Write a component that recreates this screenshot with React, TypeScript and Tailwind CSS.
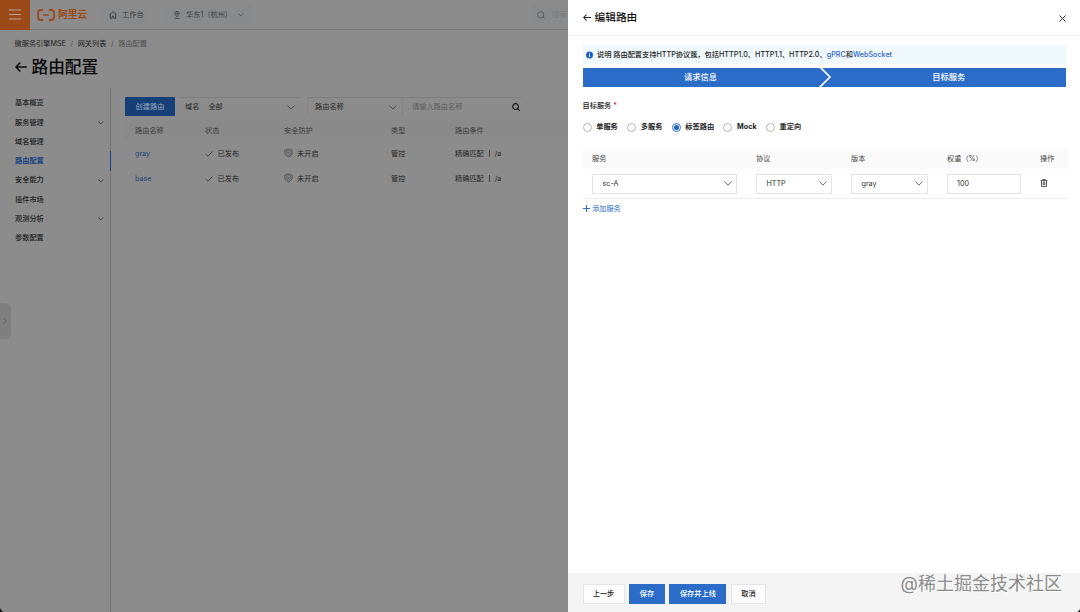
import React, { useState } from 'react';
import clsx from 'clsx';

const menuItems = [
  { label: '基本概览' },
  { label: '服务管理', expandable: true },
  { label: '域名管理' },
  { label: '路由配置', active: true },
  { label: '安全能力', expandable: true },
  { label: '插件市场' },
  { label: '观测分析', expandable: true },
  { label: '参数配置' },
];

const routes = [
  { name: 'gray', status: '已发布', security: '未开启', type: '管控', path: '/a' },
  { name: 'base', status: '已发布', security: '未开启', type: '管控', path: '/a' },
];

const targetTypes = ['单服务', '多服务', '标签路由', 'Mock', '重定向'];

const Chevron = ({ className }: { className?: string }) => (
  <svg viewBox="0 0 8 5" fill="none" stroke="currentColor" className={clsx('shrink-0', className)}>
    <path d="M0.5 0.6 4 4.2 7.5 0.6" />
  </svg>
);

const BackArrow = ({ className }: { className?: string }) => (
  <svg viewBox="0 0 12 10" fill="none" stroke="currentColor" strokeWidth="1.6" strokeLinecap="round" strokeLinejoin="round" className={clsx('shrink-0', className)}>
    <path d="M11.2 5H1M4.8 1 1 5l3.8 4" />
  </svg>
);

const TopBar = () => (
  <header className="flex h-[30px] shrink-0 items-center border-b border-[#7c7c7c]">
    <div className="flex h-[30px] w-[30px] shrink-0 items-center justify-center bg-[#9c4a17]">
      <svg viewBox="0 0 12 11" className="h-[11px] w-3" stroke="#b9a294" strokeWidth="1.1">
        <path d="M0 1h12M0 5.5h12M0 10h12" />
      </svg>
    </div>
    <svg viewBox="0 0 18 12" className="ml-[7px] h-3 w-[18px] shrink-0" fill="none" stroke="#9c4a17" strokeWidth="1.9">
      <path d="M6 1H4Q1 1 1 4v4q0 3 3 3h2M12 1h2q3 0 3 3v4q0 3-3 3h-2" />
      <path d="M6 6h6" strokeWidth="1.5" />
    </svg>
    <span className="mt-px ml-[3px] w-[30px] text-[9.8px] font-bold text-[#9c4a17]">阿里云</span>
    <div className="ml-[14px] flex h-5 w-[48px] items-center bg-[#888a8b] pl-[7px] text-[#3c3c3c]">
      <svg viewBox="0 0 8 8" className="h-2 w-2 shrink-0" fill="none" stroke="currentColor" strokeWidth="0.9">
        <path d="M0.4 3.6 4 0.8l3.6 2.8M1.3 3.2v4.2h1.9V5.2h1.6v2.2h1.9V3.2" />
      </svg>
      <span className="ml-[5px]">工作台</span>
    </div>
    <div className="ml-[17px] flex h-5 w-[86px] items-center bg-[#888a8b] pl-1.5 text-[#3c3c3c]">
      <svg viewBox="0 0 8 9" className="h-2 w-2 shrink-0" fill="none" stroke="currentColor" strokeWidth="0.9">
        <path d="M4 6.4C2.4 5.2 1.5 4.2 1.5 2.9a2.5 2.4 0 0 1 5 0C6.5 4.2 5.6 5.2 4 6.4ZM1.4 8.2h5.2" />
        <circle cx="4" cy="2.9" r="0.9" />
      </svg>
      <span className="ml-[5px] w-[49px]">华东1（杭州）</span>
      <Chevron className="ml-[3px] h-[3.5px] w-[5.5px]" />
    </div>
    <div className="ml-auto flex h-5 w-[37px] items-center bg-[#888a8b] pl-[6px] text-[#505050]">
      <svg viewBox="0 0 8 8" className="h-2 w-2 shrink-0" fill="none" stroke="currentColor" strokeWidth="0.8">
        <circle cx="3.7" cy="3.7" r="3.1" />
        <path d="m6 6 1.6 1.6" />
      </svg>
      <span className="ml-[7px] text-[#787878]">搜索</span>
    </div>
  </header>
);

const SideMenu = () => (
  <nav className="h-[524px] w-[111px] shrink-0 border-r border-[#747474] pt-[5.6px]">
    {menuItems.map(item => (
      <div key={item.label} className="flex h-[19.3px] items-center justify-between pl-[15px]">
        <span className={item.active ? 'font-bold text-[#15427f]' : 'font-medium text-[#202020]'}>{item.label}</span>
        {item.expandable && <Chevron className="mr-[6.5px] h-[3.5px] w-[5.5px] text-[#202020]" />}
        {item.active && <span className="-mr-px h-full w-[1.5px] bg-[#154184]" />}
      </div>
    ))}
  </nav>
);

const routeGrid = 'grid grid-cols-[70px_79px_107px_64px_113px] items-center pl-[10px]';

const RouteTable = () => (
  <main className="flex-1 pt-[9px] pl-[14px]">
    <div className="flex h-[19px] text-[#252525]">
      <button className="w-[50px] bg-[#173f77] text-[#9cabc0]">创建路由</button>
      <div className="ml-[5px] flex w-[120px] items-center border-t border-[#7e7e7e] pr-[5px] pl-[5px]">
        <span>域名</span>
        <span className="ml-[9px]">全部</span>
        <Chevron className="ml-auto h-[5px] w-2 text-[#494949]" />
      </div>
      <div className="ml-[7px] flex w-[96px] items-center border-x border-t border-[#7e7e7e] border-x-[#858585] pr-[5px] pl-[7px]">
        <span>路由名称</span>
        <Chevron className="ml-auto h-[5px] w-2 text-[#494949]" />
      </div>
      <div className="flex w-[118px] items-center border-t border-[#7e7e7e] pl-[9px]">
        <span className="text-[#5b5b5b]">请输入路由名称</span>
        <svg viewBox="0 0 8 8" className="mr-[1.5px] ml-auto h-2 w-2 shrink-0" fill="none" stroke="#111" strokeWidth="1.2">
          <circle cx="3.6" cy="3.6" r="2.9" />
          <path d="m5.7 5.7 2 2" />
        </svg>
      </div>
    </div>
    <div className={`${routeGrid} mt-[3px] h-[22px] bg-[#8a8a8a] pt-px text-[#3b3b3b]`}>
      <span>路由名称</span>
      <span>状态</span>
      <span>安全防护</span>
      <span>类型</span>
      <span>路由条件</span>
    </div>
    {routes.map(route => (
      <div key={route.name} className={`${routeGrid} h-[25px] text-[#252525]`}>
        <span className="text-[#1c4277]">{route.name}</span>
        <span className="flex items-center gap-[4.5px]">
          <svg viewBox="0 0 8 6" className="h-1.5 w-2" fill="none" stroke="#383838" strokeWidth="0.9">
            <path d="m0.7 3 2.2 2.2L7.5 0.6" />
          </svg>
          {route.status}
        </span>
        <span className="flex items-center gap-[4px]">
          <svg viewBox="0 0 10 10" className="mb-px h-2.5 w-[9px]" fill="none" stroke="#444" strokeWidth="0.8">
            <path d="M5 0.6 9.2 1.9v2.7c0 2.200-2 3.800-4.200 4.800C2.800 8.400 0.800 6.800 0.800 4.600V1.900Z" />
            <path d="M5 2.2 7.6 3v1.800C7.600 6 6.500 7 5 7.700 3.500 7 2.400 6 2.400 4.800V3ZM3.600 4.200h2.800M3.900 5.600h2.200" strokeWidth="0.6" />
          </svg>
          {route.security}
        </span>
        <span>{route.type}</span>
        <span className="flex items-center">
          精确匹配
          <i className="mx-[5px] h-[7px] w-px bg-[#444]" />
          {route.path}
        </span>
      </div>
    ))}
  </main>
);

const SelectBox = ({ value }: { value: string }) => (
  <div className="flex h-5 items-center justify-between border border-[#e3e3e3] bg-white pr-[4px] pl-[9.5px] text-[#333]">
    <span>{value}</span>
    <Chevron className="h-[5px] w-2 text-[#666]" />
  </div>
);

const serviceGrid = 'grid grid-cols-[145px_76px_77px_74px_28px] gap-x-[19px] items-center pl-[9.5px]';

const EditDrawer = () => {
  const [targetType, setTargetType] = useState('标签路由');

  return (
    <section className="relative flex w-[512px] shrink-0 flex-col bg-white text-[#222]">
      <div className="flex h-9 shrink-0 items-center border-b border-[#efefef] pr-[14px] pl-[14.5px]">
        <BackArrow className="h-[7px] w-2" />
        <h2 className="ml-[4px] text-[10.7px] font-medium text-[#111]">编辑路由</h2>
        <svg viewBox="0 0 7 7" className="mt-px ml-auto h-[7px] w-[7px]" stroke="#333" strokeWidth="1">
          <path d="m0.5 0.5 6 6M6.500 0.500l-6 6" />
        </svg>
      </div>

      <div className="flex-1 pr-[14px] pl-[14.5px]">
        <div className="mt-[9px] flex h-[19px] items-center bg-[#f0f9fd] pl-[3.5px] font-medium whitespace-nowrap">
          <svg viewBox="0 0 8 8" className="h-2 w-[7px] shrink-0">
            <circle cx="4" cy="4" r="4" fill="#1e5fc4" />
            <path d="M4 1.5v1M4 3.4v3" stroke="#fff" strokeWidth="1.1" />
          </svg>
          <span className="ml-[4px]">
            说明 路由配置支持HTTP协议簇，包括HTTP1.0、HTTP1.1、HTTP2.0、
            <a className="text-[#2f62c9]">gPRC</a>和<a className="text-[#2f62c9]">WebSocket</a>
          </span>
        </div>

        <div className="mt-[3.5px] flex h-[19.5px] items-center bg-[#2a6cc8] text-[8.3px] font-medium text-white">
          <span className="w-[236px] text-center">请求信息</span>
          <svg viewBox="0 0 13 20" className="h-5 w-[13px] shrink-0" fill="none" stroke="#fff" strokeWidth="1.7">
            <path d="M0.5-0.5 11 10 0.5 20.5" />
          </svg>
          <span className="flex-1 text-center">目标服务</span>
        </div>

        <p className="mt-[13px] h-3 leading-3 font-medium">
          目标服务 <span className="text-[#d93026]">*</span>
        </p>

        <div className="mt-[9px] flex h-3 items-center gap-[9.3px] font-bold">
          {targetTypes.map(type => (
            <label key={type} className="flex items-center gap-[4.7px]" onClick={() => setTargetType(type)}>
              <span className={clsx('flex h-[9px] w-[9px] items-center justify-center rounded-full border', targetType === type ? 'border-[#2a6cc8]' : 'border-[#b5b5b5]')}>
                {targetType === type && <span className="h-[5px] w-[5px] rounded-full bg-[#1e63c7]" />}
              </span>
              {type}
            </label>
          ))}
        </div>

        <div className="-mr-[2px] mt-[16px]">
          <div className={`${serviceGrid} h-[20px] bg-[#fafafa] text-[#444]`}>
            <span>服务</span>
            <span>协议</span>
            <span>版本</span>
            <span>权重（%）</span>
            <span>操作</span>
          </div>
          <div className={`${serviceGrid} h-[30px] border-b border-[#ececec]`}>
            <SelectBox value="sc-A" />
            <SelectBox value="HTTP" />
            <SelectBox value="gray" />
            <input defaultValue="100" className="h-5 w-full border border-[#e3e3e3] bg-white pl-[9px] text-[#333] outline-none" />
            <svg viewBox="0 0 8 8" className="mb-px h-2 w-2" fill="none" stroke="#444" strokeWidth="0.9">
              <path d="M0.5 1.6h7M2.7 1.5V0.5h2.6v1M1.5 1.6v6h5v-6M3.2 3.2v2.600h1.600V3.200Z" />
            </svg>
          </div>
        </div>

        <button className="mt-[4px] flex h-3 items-center text-[#2a6cc8]">
          <svg viewBox="0 0 7 7" className="mr-[2.5px] mb-px h-[7px] w-[7px]" stroke="currentColor" strokeWidth="1">
            <path d="M3.500 0v7M0 3.500h7" />
          </svg>
          添加服务
        </button>
      </div>

      <footer className="flex h-[39px] shrink-0 items-center gap-[4.7px] bg-[#f4f4f4] pt-[2px] pl-[14.5px] font-medium">
        <button className="h-5 w-[42px] border border-[#e4e4e4] bg-[#fdfdfd]">上一步</button>
        <button className="h-5 w-[35.5px] bg-[#2a6cc8] text-white">保存</button>
        <button className="h-5 w-[57px] bg-[#2a6cc8] text-white">保存并上线</button>
        <button className="h-5 w-[35px] border border-[#e4e4e4] bg-[#fdfdfd]">取消</button>
      </footer>

      <span className="absolute right-[18px] bottom-[16px] text-[18px] leading-6 whitespace-nowrap text-[#8b8b8b] [text-shadow:1px_1px_0_#fff]">
        @稀土掘金技术社区
      </span>
      <svg viewBox="0 0 4 4" className="absolute right-0 bottom-0 h-[3px] w-[3px]">
        <path d="M4 0v4H0Q3 3 4 0Z" fill="#111" />
      </svg>
    </section>
  );
};

const App: React.FC = () => (
  <div className="flex h-[612px] w-[1080px] overflow-hidden font-[Inter,'Noto_Sans_CJK_SC',sans-serif] text-[7.2px] leading-[12px]">
    <div className="relative flex w-[568px] shrink-0 flex-col bg-[#8c8c8c]">
      <TopBar />
      <div className="flex h-[58px] shrink-0 flex-col pl-[14.5px]">
        <div className="mt-[8px] flex h-3 gap-[4.6px] whitespace-nowrap text-[#202020]">
          <span>微服务引擎MSE</span>
          <span className="text-[#4d4d4d]">/</span>
          <span>网关列表</span>
          <span className="text-[#4d4d4d]">/</span>
          <span className="text-[#505050]">路由配置</span>
        </div>
        <div className="mt-[5px] flex h-6 items-center text-[#080808]">
          <BackArrow className="h-[10px] w-3" />
          <h1 className="ml-[5px] text-[16.7px] font-medium">路由配置</h1>
        </div>
      </div>
      <div className="flex flex-1">
        <SideMenu />
        <RouteTable />
      </div>
      <div className="absolute top-[303px] left-0 flex h-9 w-[11px] items-center rounded-r-[6px] bg-[#7f7f7f] text-[#555]">
        <Chevron className="ml-[2px] h-1 w-[6px] -rotate-90" />
      </div>
      <svg viewBox="0 0 4 4" className="absolute bottom-0 left-0 h-1 w-1">
        <path d="M0 0v4h4Q1 3 0 0Z" fill="#111" />
      </svg>
    </div>
    <EditDrawer />
  </div>
);

export default App;
